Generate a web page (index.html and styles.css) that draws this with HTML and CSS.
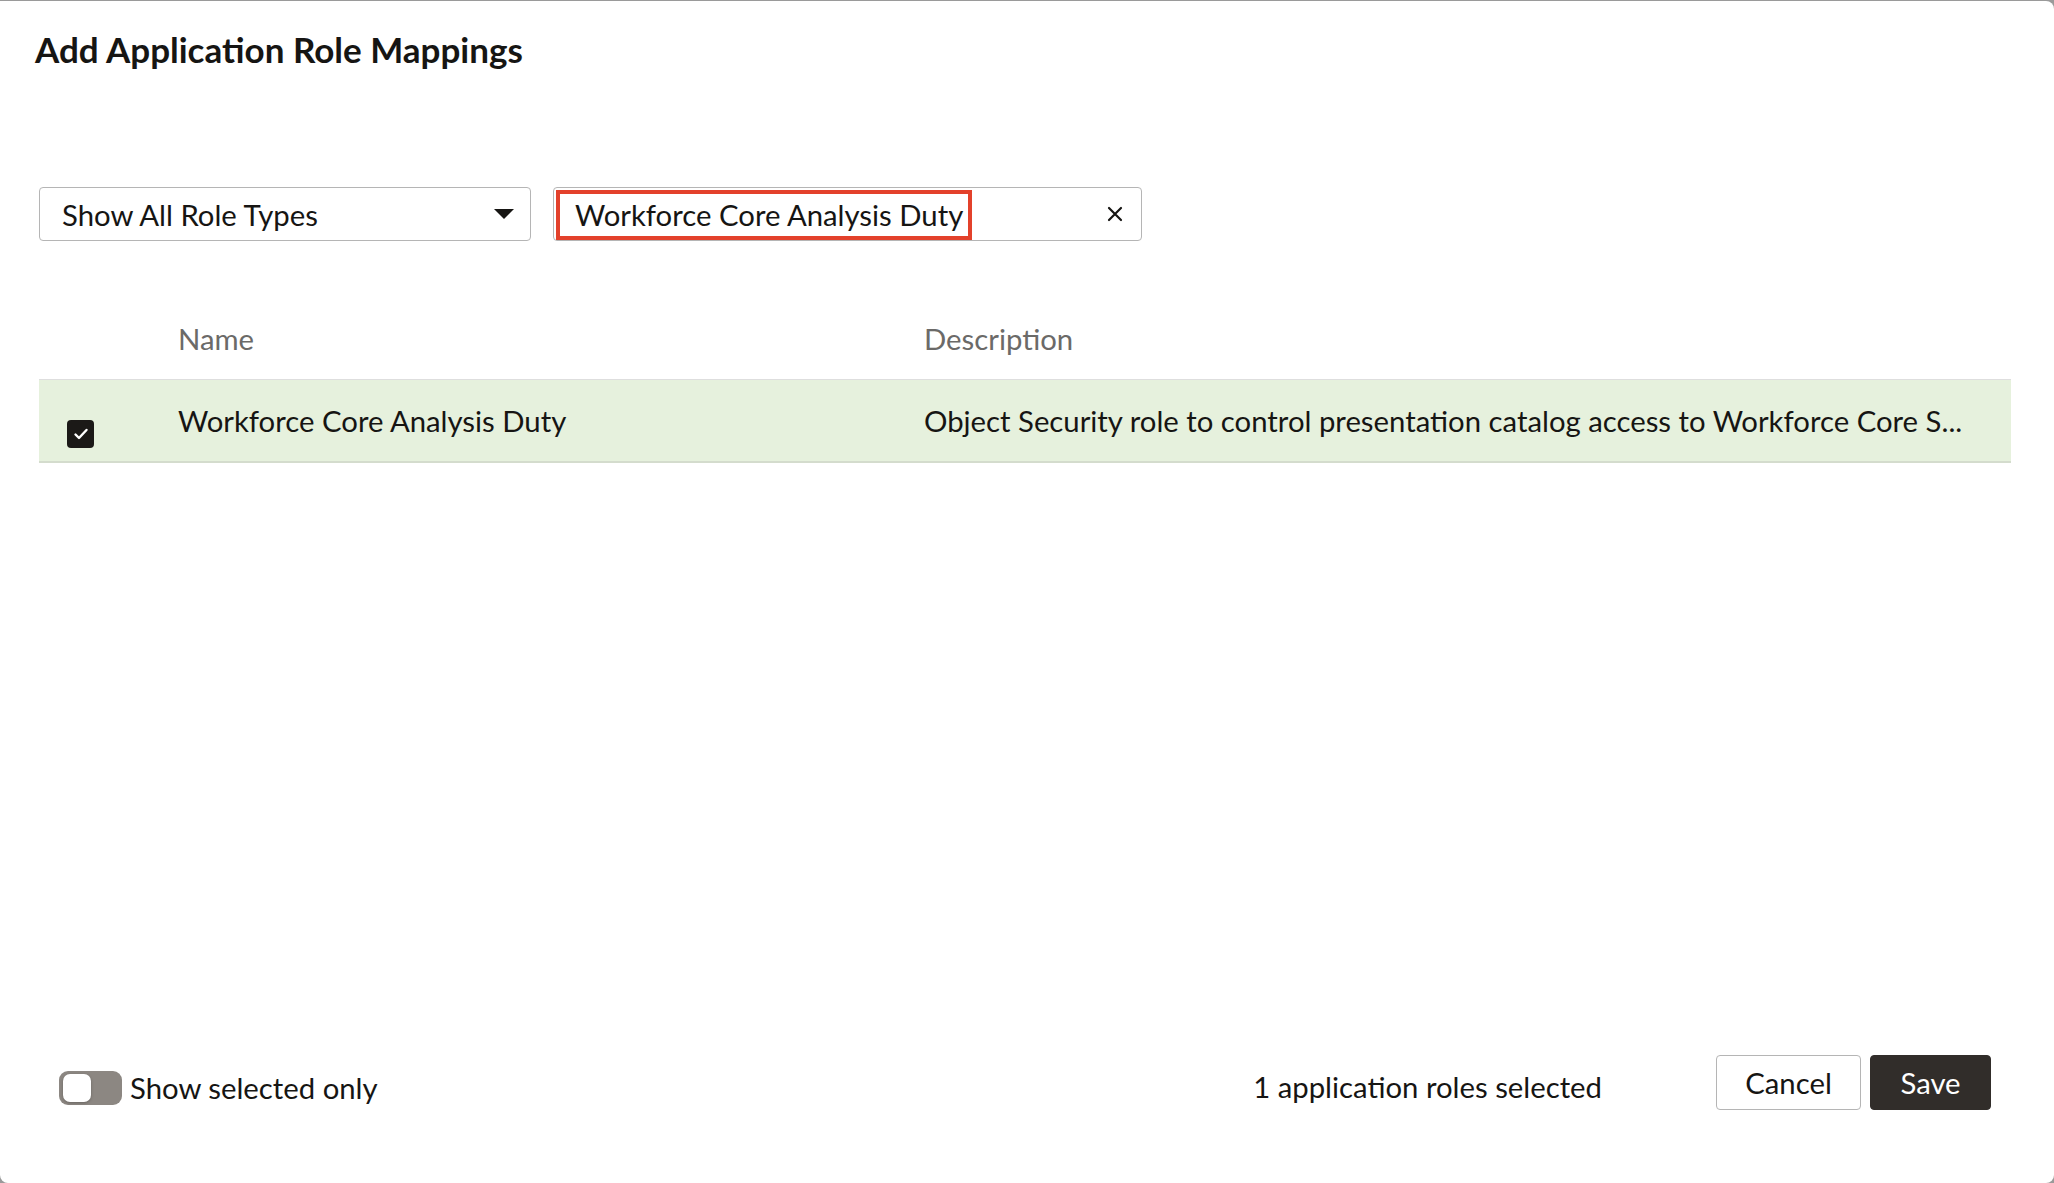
FILE: index.html
```html
<!DOCTYPE html>
<html lang="en">
<head>
<meta charset="utf-8">
<title>Add Application Role Mappings</title>
<link rel="stylesheet" href="styles.css">
</head>
<body>
<div class="dialog">
  <h1 class="title">Add Application Role Mappings</h1>

  <div class="toolbar">
    <div class="select">
      <span class="select-text">Show All Role Types</span>
      <svg class="caret" width="22" height="12" viewBox="0 0 22 12"><path d="M1 1 L21 1 L11 11 Z" fill="#161513"/></svg>
    </div>
    <div class="search">
      <span class="search-text">Workforce Core Analysis Duty</span>
      <span class="highlight"></span>
      <svg class="clear" width="16" height="16" viewBox="0 0 16 16"><path d="M2 2 L14 14 M14 2 L2 14" stroke="#161513" stroke-width="2.2" stroke-linecap="round"/></svg>
    </div>
  </div>

  <div class="table">
    <div class="thead">
      <div class="col-check"></div>
      <div class="col-name">Name</div>
      <div class="col-desc">Description</div>
    </div>
    <div class="trow selected">
      <div class="col-check">
        <span class="checkbox">
          <svg width="16" height="14" viewBox="0 0 16 14"><path d="M2.5 7.5 L6 11 L13.5 3" fill="none" stroke="#ffffff" stroke-width="2.4" stroke-linecap="round" stroke-linejoin="round"/></svg>
        </span>
      </div>
      <div class="col-name">Workforce Core Analysis Duty</div>
      <div class="col-desc">Object Security role to control presentation catalog access to Workforce Core S...</div>
    </div>
  </div>

  <div class="footer">
    <label class="toggle-wrap">
      <span class="toggle"><span class="knob"></span></span>
      <span class="toggle-label">Show selected only</span>
    </label>
    <div class="footer-right">
      <span class="count">1 application roles selected</span>
      <div class="buttons">
        <button class="btn btn-outline">Cancel</button>
        <button class="btn btn-primary">Save</button>
      </div>
    </div>
  </div>
</div>
</body>
</html>
```

FILE: styles.css
```css
html, body {
  margin: 0;
  padding: 0;
  height: 100%;
}
body {
  background: #9a9a9a;
  font-family: "Lato", "Noto Sans", sans-serif;
  color: #161513;
  overflow: hidden;
}
.dialog {
  box-sizing: border-box;
  margin-top: 1px;
  height: 1182px;
  background: #ffffff;
  border-radius: 0 8px 8px 8px;
  display: flex;
  flex-direction: column;
}
.title {
  margin: 0;
  padding: 28px 0 0 35px;
  font-size: 35px;
  font-weight: 700;
  line-height: 40px;
}
.toolbar {
  display: flex;
  gap: 22px;
  margin-top: 118px;
  padding-left: 39px;
}
.select, .search {
  box-sizing: border-box;
  height: 54px;
  border: 1.5px solid #b5b5b5;
  border-radius: 4px;
  display: flex;
  align-items: center;
  font-size: 29.3px;
}
.select {
  width: 492px;
  padding: 0 15px 0 22px;
  justify-content: space-between;
}
.search {
  width: 589px;
  padding: 0 18px 0 21px;
  justify-content: space-between;
  position: relative;
}
.highlight {
  position: absolute;
  left: 2px;
  top: 2px;
  width: 416px;
  height: 50px;
  box-sizing: border-box;
  border: 4px solid #e3412b;
}
.table {
  flex: 1;
  padding: 0 43px 0 39px;
  margin-top: 72px;
}
.thead, .trow {
  display: flex;
  align-items: center;
  font-size: 29.3px;
}
.thead {
  height: 50px;
  margin-bottom: 16px;
  color: #6b6a68;
}
.trow {
  box-sizing: border-box;
  height: 84px;
  border-top: 1px solid #dedede;
  border-bottom: 2px solid #d4dccd;
}
.trow.selected {
  background: #e6f1dd;
}
.col-check {
  width: 139px;
  flex: none;
  align-self: stretch;
  display: flex;
  align-items: center;
}
.trow .col-check {
  padding-top: 26px;
  box-sizing: border-box;
}
.col-name {
  width: 746px;
  flex: none;
}
.col-desc {
  flex: 1;
  min-width: 0;
  white-space: nowrap;
  overflow: hidden;
  text-overflow: ellipsis;
  padding-right: 30px;
}
.checkbox {
  margin-left: 28px;
  width: 27px;
  height: 28px;
  background: #1b1917;
  border-radius: 4px;
  display: flex;
  align-items: center;
  justify-content: center;
}
.footer {
  display: flex;
  align-items: flex-end;
  justify-content: space-between;
  padding: 0 63px 73px 59px;
  font-size: 29.3px;
}
.toggle-wrap {
  display: flex;
  align-items: center;
  gap: 8px;
  margin-bottom: 5px;
}
.toggle {
  box-sizing: border-box;
  width: 63px;
  height: 34px;
  background: #8c8782;
  border-radius: 9px;
  padding: 3px 4px;
  display: flex;
  align-items: center;
  margin-top: 2px;
}
.knob {
  width: 28px;
  height: 28px;
  background: #ffffff;
  border-radius: 7px;
  box-shadow: 0 1px 3px rgba(0,0,0,0.25);
}
.footer-right {
  display: flex;
  align-items: center;
  gap: 114px;
}
.count {
  margin-top: 8px;
}
.buttons {
  display: flex;
  gap: 9px;
}
.btn {
  box-sizing: border-box;
  height: 55px;
  font-family: inherit;
  font-size: 29.3px;
  border-radius: 4px;
  padding: 0;
  cursor: pointer;
}
.btn-outline {
  width: 145px;
  background: #ffffff;
  border: 1.5px solid #b5b5b5;
  color: #161513;
}
.btn-primary {
  width: 121px;
  background: #312d2a;
  border: 1.5px solid #312d2a;
  color: #ffffff;
}
```
